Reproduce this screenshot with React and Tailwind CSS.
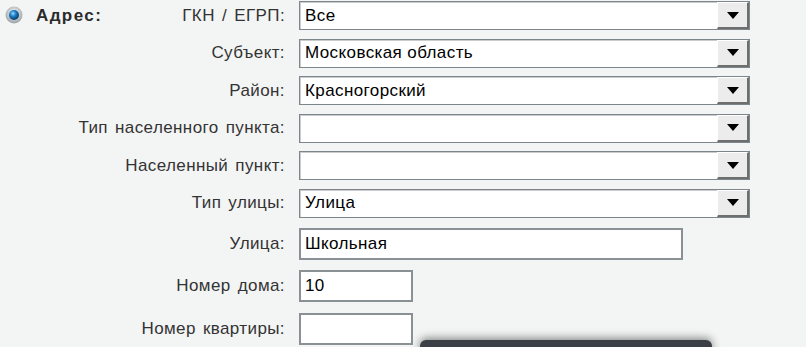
import React from 'react';

const selects = [
  { label: 'ГКН / ЕГРП:', value: 'Все' },
  { label: 'Субъект:', value: 'Московская область' },
  { label: 'Район:', value: 'Красногорский' },
  { label: 'Тип населенного пункта:', value: '' },
  { label: 'Населенный пункт:', value: '' },
  { label: 'Тип улицы:', value: 'Улица' },
];

const inputs = [
  { label: 'Улица:', value: 'Школьная', width: 'w-[384px]' },
  { label: 'Номер дома:', value: '10', width: 'w-[114px]' },
  { label: 'Номер квартиры:', value: '', width: 'w-[114px]' },
];

const RadioIcon = () => (
  <svg width="18" height="18" viewBox="0 0 18 18">
    <defs>
      <radialGradient id="ring" cx="50%" cy="40%" r="60%">
        <stop offset="0%" stopColor="#ffffff" />
        <stop offset="100%" stopColor="#9aa0a4" />
      </radialGradient>
      <radialGradient id="dot" cx="40%" cy="35%" r="65%">
        <stop offset="0%" stopColor="#9fd8ff" />
        <stop offset="45%" stopColor="#1a7fc8" />
        <stop offset="100%" stopColor="#0b3a66" />
      </radialGradient>
    </defs>
    <circle cx="9" cy="9" r="8.5" fill="url(#ring)" />
    <circle cx="9" cy="9" r="5" fill="url(#dot)" />
  </svg>
);

const Arrow = () => (
  <svg width="12" height="7" viewBox="0 0 12 7">
    <path d="M0 0 H12 L6 7 Z" fill="#000" />
  </svg>
);

// подпись прижата вправо и может вылезать влево за колонку
const Label = ({ children }) => (
  <div className="w-[183px] flex justify-end pr-[14px] text-[17px] text-[#333] whitespace-nowrap tracking-[0.4px] [word-spacing:2px]">
    <span>{children}</span>
  </div>
);

const App = () => {
  return (
    <div
      className="relative w-[806px] h-[347px] overflow-hidden bg-[#f3f5f5]"
      style={{ fontFamily: '"Liberation Sans", Arial, sans-serif' }}
    >
      <div className="flex">
        {/* заголовок секции */}
        <div className="w-[116px] shrink-0 flex items-start gap-[13px] pl-[5px] pt-[6px]">
          <RadioIcon />
          <span className="text-[17px] font-bold text-[#2b2b2b] tracking-[1.4px] leading-[20px]">
            Адрес:
          </span>
        </div>

        <div className="flex flex-col pt-[1px]">
          {selects.map((row) => (
            <div key={row.label} className="flex items-center h-[29px] mb-[8.5px]">
              <Label>{row.label}</Label>
              <div className="flex items-center w-[451px] h-[29px] bg-white border border-[#7d868b] shadow-[inset_1px_1px_0_#c9cdd0]">
                <span className="flex-1 pl-[5px] text-[17px] text-black tracking-[0.4px]">
                  {row.value}
                </span>
                <div className="flex items-center justify-center w-[32px] h-[27px] bg-[#ececec] border-t border-l border-t-white border-l-white border-r-2 border-b-2 border-r-[#6e6e6e] border-b-[#6e6e6e]">
                  <Arrow />
                </div>
              </div>
            </div>
          ))}

          <div className="flex flex-col mt-[1.5px]">
            {inputs.map((row) => (
              <div key={row.label} className="flex items-center h-[32px] mb-[10.5px]">
                <Label>{row.label}</Label>
                <div
                  className={`${row.width} h-[32px] flex items-center bg-white border-2 border-[#8a9195]`}
                >
                  <span className="pl-[4px] text-[17px] text-black tracking-[0.4px]">{row.value}</span>
                </div>
              </div>
            ))}
          </div>
        </div>
      </div>

      {/* всплывающая панель снизу */}
      <div className="absolute left-[420px] top-[340px] w-[292px] h-[20px] rounded-t-[6px] bg-[#3b4046] shadow-[0_-2px_8px_rgba(0,0,0,0.45)]" />
    </div>
  );
};

export default App;
